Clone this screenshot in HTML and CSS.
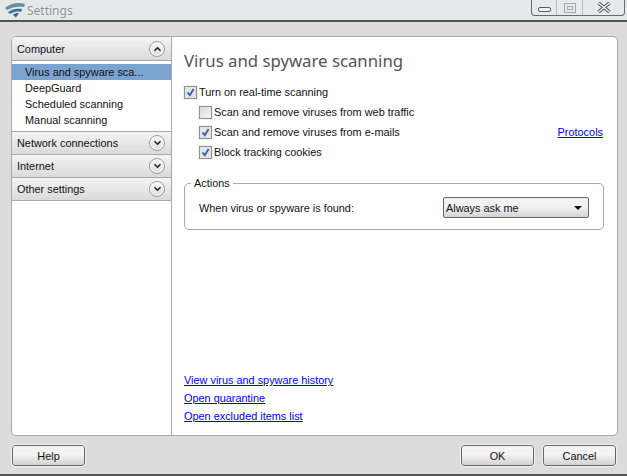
FILE: index.html
```html
<!DOCTYPE html>
<html>
	<head>
		<meta http-equiv="Content-Type" content="text/html; charset=utf-8">
		<title>Settings</title>
		<link rel="stylesheet" href="styles.css">
	</head>
	<body>
		<header class="titlebar">
			<svg class="logo" width="24" height="18" viewBox="0 0 24 18">
				<path d="M2 7 C8 2 15 1 22 3 L21 6 C15 5 9 6 4 9 Z" fill="#6d8ca0"/>
				<path d="M5 11 C9 8 14 7 19 8 L18 11 C14 10 10 11 7 13 Z" fill="#41708e"/>
				<path d="M10 14 C11 12.5 13 12 16 12 L13 16.5 Z" fill="#3f6a86"/>
			</svg>
			<span class="title">Settings</span>
			<div class="winbtns">
				<div class="winbtn min"><span class="min-icon"></span></div>
				<div class="winbtn max"><span class="max-icon"><i></i></span></div>
				<div class="winbtn close">
					<svg width="14" height="11" viewBox="0 0 14 11">
						<path d="M1.5 1 L12.5 10 M12.5 1 L1.5 10" stroke="#4a5260" stroke-width="3.4"/>
						<path d="M1.5 1 L12.5 10 M12.5 1 L1.5 10" stroke="#eef1f1" stroke-width="1.6"/>
					</svg>
				</div>
			</div>
		</header>

		<div class="panel">
			<nav class="side">
				<div class="sect sect-first">
					<span>Computer</span>
					<span class="arrow"><svg width="9" height="6" viewBox="0 0 9 6"><path d="M1.5 4.8 L4.5 1.8 L7.5 4.8" stroke="#222" stroke-width="1.6" fill="none"/></svg></span>
				</div>
				<ul class="items">
					<li class="sel">Virus and spyware sca...</li>
					<li>DeepGuard</li>
					<li>Scheduled scanning</li>
					<li>Manual scanning</li>
				</ul>
				<div class="sect">
					<span>Network connections</span>
					<span class="arrow"><svg width="9" height="6" viewBox="0 0 9 6"><path d="M1.5 1.2 L4.5 4.2 L7.5 1.2" stroke="#222" stroke-width="1.6" fill="none"/></svg></span>
				</div>
				<div class="sect">
					<span>Internet</span>
					<span class="arrow"><svg width="9" height="6" viewBox="0 0 9 6"><path d="M1.5 1.2 L4.5 4.2 L7.5 1.2" stroke="#222" stroke-width="1.6" fill="none"/></svg></span>
				</div>
				<div class="sect">
					<span>Other settings</span>
					<span class="arrow"><svg width="9" height="6" viewBox="0 0 9 6"><path d="M1.5 1.2 L4.5 4.2 L7.5 1.2" stroke="#222" stroke-width="1.6" fill="none"/></svg></span>
				</div>
			</nav>

			<main class="content">
				<h1>Virus and spyware scanning</h1>
				<div class="check">
					<span class="box on"><svg width="9" height="9" viewBox="0 0 9 9"><path d="M1.5 4.5 L3.8 7.2 L7.6 1" stroke="#3a5fb0" stroke-width="1.9" fill="none"/></svg></span>
					Turn on real-time scanning
				</div>
				<div class="check sub">
					<span class="box"></span>
					Scan and remove viruses from web traffic
				</div>
				<div class="check sub">
					<span class="box on"><svg width="9" height="9" viewBox="0 0 9 9"><path d="M1.5 4.5 L3.8 7.2 L7.6 1" stroke="#3a5fb0" stroke-width="1.9" fill="none"/></svg></span>
					Scan and remove viruses from e-mails
					<a class="link protocols" href="#">Protocols</a>
				</div>
				<div class="check sub">
					<span class="box on"><svg width="9" height="9" viewBox="0 0 9 9"><path d="M1.5 4.5 L3.8 7.2 L7.6 1" stroke="#3a5fb0" stroke-width="1.9" fill="none"/></svg></span>
					Block tracking cookies
				</div>

				<fieldset class="actions">
					<legend>Actions</legend>
					<span>When virus or spyware is found:</span>
					<div class="combo">
						<span>Always ask me</span>
						<span class="caret"></span>
					</div>
				</fieldset>

				<div class="links">
					<a class="link" href="#">View virus and spyware history</a>
					<a class="link" href="#">Open quarantine</a>
					<a class="link" href="#">Open excluded items list</a>
				</div>
			</main>
		</div>

		<footer class="foot">
			<button class="btn">Help</button>
			<div class="foot-right">
				<button class="btn">OK</button>
				<button class="btn">Cancel</button>
			</div>
		</footer>
	</body>
</html>
```

FILE: styles.css
```css
html, body {
	margin: 0;
	padding: 0;
	height: 476px;
	overflow: hidden;
}

body {
	display: flex;
	flex-direction: column;
	width: 627px;
	background: #dcdcdc;
	font-family: "Liberation Sans", Arial, sans-serif;
	font-size: 10.9px;
	color: #111;
	box-sizing: border-box;
	border-bottom: 2px solid #555;
}

.titlebar {
	display: flex;
	align-items: flex-start;
	height: 20px;
	flex: none;
	background: #e3e8e9;
	border-bottom: 2px solid #555;
	margin-bottom: 14px;
}

.logo {
	margin: 1px 0 0 3px;
}

.title {
	margin: 2px 0 0 0;
	font-family: "Noto Sans", sans-serif;
	font-size: 12px;
	line-height: 18px;
	color: #8c9092;
	text-shadow: 0 0 3px #fff;
}

.winbtns {
	display: flex;
	margin-left: auto;
	margin-right: 2px;
	height: 15px;
	background: #e6eaea;
	border: 1px solid #666b70;
	border-top: 0;
	border-radius: 0 0 4px 4px;
}

.winbtn {
	display: flex;
	align-items: center;
	justify-content: center;
	border-right: 1px solid #b4b9bc;
}

.min { width: 24px; }
.max { width: 25px; }
.close { width: 41px; border-right: 0; }

.min-icon {
	width: 11px;
	height: 3px;
	margin-top: 4px;
	border: 1px solid #555c68;
	border-radius: 2px;
	background: #f4f4f4;
}

.max-icon {
	display: flex;
	align-items: center;
	justify-content: center;
	width: 10px;
	height: 8px;
	border: 1px solid #a4a9ac;
}

.max-icon i {
	width: 4px;
	height: 2px;
	border: 1px solid #a4a9ac;
}

.panel {
	display: flex;
	width: 607px;
	height: 400px;
	margin-left: 11px;
	flex: none;
	box-sizing: border-box;
	background: #fff;
	border: 1px solid #a8a8a8;
	border-radius: 5px;
}

.side {
	width: 159px;
	flex: none;
	border-right: 1px solid #a8a8a8;
}

.sect {
	display: flex;
	align-items: center;
	justify-content: space-between;
	height: 22px;
	padding: 0 6px 0 5px;
	background: linear-gradient(#f4f4f4, #dadada);
	border-bottom: 1px solid #a8a8a8;
}

.sect-first {
	height: 23px;
	border-radius: 4px 0 0 0;
}

.arrow {
	display: flex;
	align-items: center;
	justify-content: center;
	width: 14px;
	height: 14px;
	border: 1px solid #999;
	border-radius: 50%;
	background: linear-gradient(#fafafa, #dcdcdc);
	box-shadow: inset 0 0 0 1px #fff;
}

.items {
	list-style-type: none;
	margin: 0;
	padding: 3px 0;
	border-bottom: 1px solid #a8a8a8;
}

.items li {
	height: 16px;
	line-height: 16px;
	padding-left: 13px;
}

.items .sel {
	background: #7aa3d0;
}

.content {
	display: flex;
	flex-direction: column;
	flex: 1;
	padding: 0 13px 11px 12px;
}

h1 {
	margin: 11px 0 8px;
	font-family: "Noto Sans", sans-serif;
	font-size: 16.75px;
	font-weight: normal;
	line-height: 26px;
	color: #555;
}

.check {
	display: flex;
	align-items: center;
	gap: 2px;
	height: 20px;
}

.sub {
	padding-left: 15px;
}

.box {
	display: flex;
	align-items: center;
	justify-content: center;
	width: 11px;
	height: 11px;
	border: 1px solid #8e8f8f;
	outline: 1px solid #f4f4f4;
	background: linear-gradient(135deg, #d8d8d8, #f6f6f6);
}

.box.on {
	background: #e4e4e4;
}

.link {
	color: #0000ee;
	text-decoration: underline;
}

.protocols {
	margin-left: auto;
	margin-right: 1px;
}

.actions {
	display: flex;
	align-items: center;
	justify-content: space-between;
	height: 53px;
	margin: 15px 0 0;
	padding: 8px 14px 0 14px;
	box-sizing: border-box;
	border: 1px solid #a8a8a8;
	border-radius: 5px;
}

.actions legend {
	padding: 0 3px;
	margin-left: -8px;
	line-height: 12px;
}

.combo {
	display: flex;
	align-items: center;
	justify-content: space-between;
	width: 146px;
	height: 21px;
	padding: 0 6px 0 2px;
	box-sizing: border-box;
	border: 1px solid #666;
	border-radius: 2px;
	background: linear-gradient(#f2f2f2 45%, #d4d4d4);
}

.caret {
	width: 0;
	height: 0;
	border: 4px solid transparent;
	border-top: 4px solid #111;
	border-bottom: 0;
}

.links {
	display: flex;
	flex-direction: column;
	align-items: flex-start;
	gap: 3px;
	margin-top: auto;
}

.links a {
	line-height: 15px;
}

.foot {
	display: flex;
	justify-content: space-between;
	padding: 9px 11px 0 12px;
}

.foot-right {
	display: flex;
	gap: 9px;
}

.btn {
	width: 73px;
	height: 21px;
	padding: 0;
	font: inherit;
	color: #111;
	border: 1px solid #666;
	border-radius: 3px;
	outline: 1px solid #f2f2f2;
	background: linear-gradient(#f4f4f4 45%, #d2d2d2);
}
```
